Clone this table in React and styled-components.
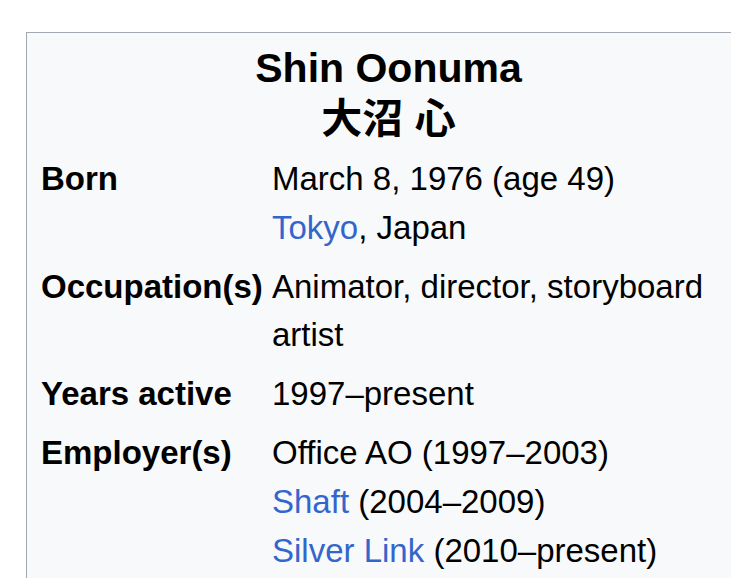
import React from "react";
import styled, { createGlobalStyle } from "styled-components";

const Global = createGlobalStyle`
  html, body { margin: 0; padding: 0; overflow: hidden; background: #ffffff; }
  body { font-family: "Liberation Sans", Arial, "Noto Sans CJK JP", sans-serif; color: #000000; }
`;

const Page = styled.div`
  padding: 32px 0 0 26px;
  width: 800px;
`;

const Infobox = styled.div`
  width: 723px;
  border: 1px solid #a2a9b1;
  background: #f8f9fa;
  padding: 10px 0 40px 0;
  font-size: 33px;
  line-height: 48.8px;
`;

const Title = styled.div`
  text-align: center;
  font-weight: bold;
  font-size: 41px;
  line-height: 51px;
  padding-bottom: 5px;
`;

const NativeName = styled.div`
  font-family: "Liberation Sans", "Noto Sans CJK JP", sans-serif;
`;

const Grid = styled.div`
  display: grid;
  grid-template-columns: 231px 1fr;
  padding: 0 14px;
`;

const Label = styled.div`
  font-weight: bold;
  padding: 5px 0;
`;

const Value = styled.div`
  padding: 5px 0;
`;

const Link = styled.a`
  color: #3366cc;
  text-decoration: none;
`;

export default function App() {
  return (
    <>
      <Global />
      <Page>
        <Infobox>
          <Title>
            <div>Shin Oonuma</div>
            <NativeName lang="ja">大沼 心</NativeName>
          </Title>
          <Grid>
            <Label>Born</Label>
            <Value>
              March 8, 1976 (age 49)
              <br />
              <Link href="#">Tokyo</Link>, Japan
            </Value>
            <Label>Occupation(s)</Label>
            <Value>Animator, director, storyboard artist</Value>
            <Label>Years active</Label>
            <Value>1997–present</Value>
            <Label>Employer(s)</Label>
            <Value>
              Office AO (1997–2003)
              <br />
              <Link href="#">Shaft</Link> (2004–2009)
              <br />
              <Link href="#">Silver Link</Link> (2010–present)
            </Value>
          </Grid>
        </Infobox>
      </Page>
    </>
  );
}
